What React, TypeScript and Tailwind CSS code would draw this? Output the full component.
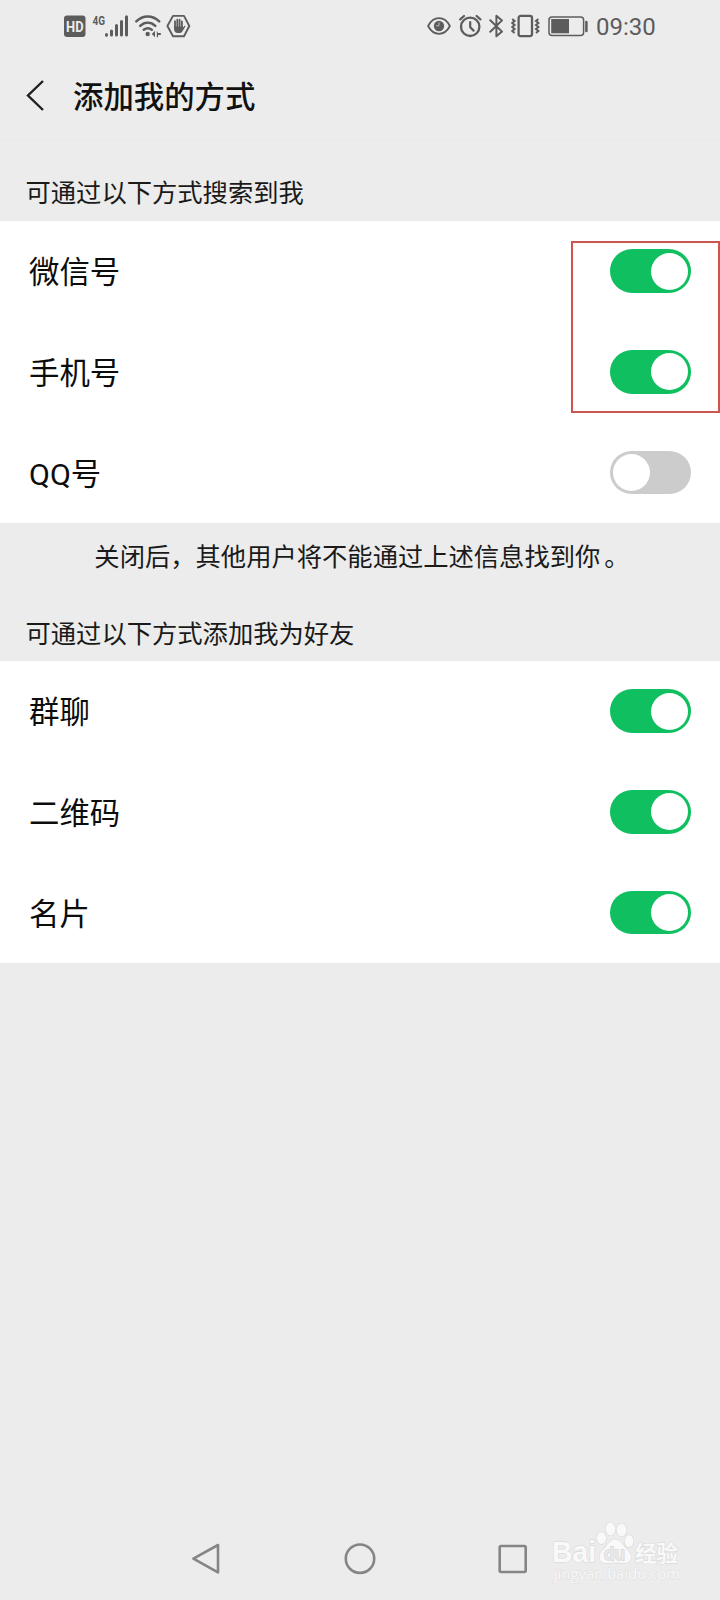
import { useState } from "react";

type Option = {
  id: string;
  label: string;
  enabled: boolean;
};

const searchOptions: Option[] = [
  { id: "wechat", label: "微信号", enabled: true },
  { id: "phone", label: "手机号", enabled: true },
  { id: "qq", label: "QQ号", enabled: false },
];

const friendOptions: Option[] = [
  { id: "group", label: "群聊", enabled: true },
  { id: "qrcode", label: "二维码", enabled: true },
  { id: "card", label: "名片", enabled: true },
];

function StatusBar() {
  return (
    <div className="flex h-[52px] items-center justify-between pl-[63.5px] pr-[63px] text-[#5c5c5c]">
      <div className="flex items-center">
        <svg width="22" height="24" viewBox="0 0 22 24">
          <rect x="0" y="1.5" width="21.5" height="21.5" rx="3" fill="currentColor" />
          <text
            x="10.8"
            y="17.6"
            textAnchor="middle"
            textLength="17.5"
            lengthAdjust="spacingAndGlyphs"
            fill="#ededed"
            className="font-['Roboto',sans-serif] text-[14.5px] font-bold"
          >
            HD
          </text>
        </svg>

        <svg className="ml-[6px] overflow-visible" width="37" height="24" viewBox="0 0 37 24">
          <text
            x="0.5"
            y="10.8"
            textLength="12.5"
            lengthAdjust="spacingAndGlyphs"
            fill="currentColor"
            className="font-['Roboto',sans-serif] text-[13.5px] font-bold"
          >
            4G
          </text>
          <g stroke="currentColor" strokeWidth="3" strokeLinecap="round">
            <path d="M14.5 20.4v.8M19.5 17v4M24.5 11.5V21M29.5 7.5V21M34.5 2.8V21" />
          </g>
        </svg>

        <svg className="ml-[5px]" width="28" height="24" viewBox="0 0 28 24" fill="none">
          <g stroke="currentColor" strokeWidth="2.5" strokeLinecap="round">
            <path d="M2.3 7.4C9 .8 18.5 .8 25.2 7.4" />
            <path d="M6.2 11.8c4.6-4.2 10.5-4.2 15.1 0" />
            <path d="M9.8 15.7c2.6-2 5.4-2 8 0" />
          </g>
          <circle cx="13.7" cy="20" r="2.2" fill="currentColor" />
          <path d="M21 16.8v6.4l-3.2-3.2zM22.8 16.8v6.4h1.2v-2.1h2.8v-2.2H24z" fill="currentColor" />
        </svg>

        <svg className="ml-[4px]" width="25" height="24" viewBox="0 0 25 24" fill="none">
          <path d="M7 1.9h11l5.3 10.1L18 22.3H7L1.4 12z" stroke="currentColor" strokeWidth="1.9" strokeLinejoin="round" />
          <path
            d="M9 14V7.2M11.3 13V5.7M13.6 13V5.7M15.9 14V7.5"
            stroke="currentColor"
            strokeWidth="1.8"
            strokeLinecap="round"
          />
          <path
            d="M8.1 12.5h8.7v1.2l1.4-1.7c.7-.5 1.3.1 1 .7l-2.7 4.6c-.7 1.2-1.6 1.8-3.2 1.8h-1.5c-2.3 0-3.7-1.6-3.7-3.8z"
            fill="currentColor"
          />
        </svg>
      </div>

      <div className="flex items-center">
        <svg width="24" height="24" viewBox="0 0 24 24" fill="none">
          <path d="M1.1 12C6.5 1.6 17.5 1.6 22.9 12 17.5 22.4 6.5 22.4 1.1 12z" stroke="currentColor" strokeWidth="1.8" strokeLinejoin="round" />
          <circle cx="12" cy="12" r="5.2" fill="currentColor" />
          <path d="M12 8.4v3.4h-3" stroke="#b8b8b8" strokeWidth="1" />
        </svg>

        <svg className="ml-[8px]" width="23" height="24" viewBox="0 0 23 24" fill="none" stroke="currentColor" strokeLinecap="round">
          <circle cx="11.2" cy="12.8" r="9.2" strokeWidth="2.3" />
          <path d="M11.2 8v5.2l3.4 3.4" strokeWidth="2.2" strokeLinejoin="round" />
          <path d="M1.2 5.4l3.8-3.4M21.4 5.4L17.6 2" strokeWidth="2.2" />
        </svg>

        <svg className="ml-[7px]" width="15" height="24" viewBox="0 0 15 24" fill="none" stroke="currentColor">
          <path d="M1.3 6.2L13 17.6l-5.6 4.7V1.8L13 6.4 1.3 17.8" strokeWidth="2" strokeLinejoin="round" strokeLinecap="round" />
        </svg>

        <svg className="ml-[7px]" width="29" height="24" viewBox="0 0 29 24" fill="none" stroke="currentColor">
          <rect x="7.6" y="1.9" width="13.4" height="20.2" rx="2" strokeWidth="2.3" />
          <path
            d="M1.2 5l2.4 2-2.4 2 2.4 2-2.4 2 2.4 2-2.4 2 2.4 2M27.4 5l-2.4 2 2.4 2-2.4 2 2.4 2-2.4 2 2.4 2-2.4 2"
            strokeWidth="2"
          />
        </svg>

        <svg className="ml-[8px]" width="42" height="24" viewBox="0 0 42 24" fill="none">
          <rect x="1" y="3" width="34.6" height="18.4" rx="3" stroke="currentColor" strokeWidth="1.5" />
          <rect x="3.2" y="5" width="17.8" height="14.3" fill="currentColor" />
          <path d="M38.4 8v9" stroke="currentColor" strokeWidth="2.5" strokeLinecap="round" />
        </svg>

        <span className="ml-[6px] w-[61px] whitespace-nowrap pt-[2px] font-['Roboto',sans-serif] text-[24px] leading-6">
          09:30
        </span>
      </div>
    </div>
  );
}

type SwitchProps = {
  checked: boolean;
  onChange: () => void;
};

function Switch({ checked, onChange }: SwitchProps) {
  return (
    <button
      type="button"
      role="switch"
      aria-checked={checked}
      onClick={onChange}
      className={`flex h-[43.5px] w-[81.5px] items-center rounded-full px-[3px] ${
        checked ? "justify-end bg-[#10bf60]" : "justify-start bg-[#cccccc]"
      }`}
    >
      <span className="size-[37px] rounded-full bg-white" />
    </button>
  );
}

function OptionList({ items }: { items: Option[] }) {
  const [options, setOptions] = useState(items);

  const toggle = (id: string) => {
    setOptions(options.map((o) => (o.id === id ? { ...o, enabled: !o.enabled } : o)));
  };

  return (
    <ul className="bg-white">
      {options.map((option) => (
        <li
          key={option.id}
          className="flex h-[100.7px] items-center justify-between pb-[0.4px] pl-[29px] pr-[28.6px] text-[30.4px] text-[#0c0c0c]"
        >
          <span className="pt-1">{option.label}</span>
          <Switch checked={option.enabled} onChange={() => toggle(option.id)} />
        </li>
      ))}
    </ul>
  );
}

function Watermark() {
  return (
    <svg
      className="absolute bottom-[12px] left-[548px]"
      width="140"
      height="72"
      viewBox="0 0 140 72"
      fill="#f9f9f9"
      stroke="#dcdcdc"
      strokeWidth="1.3"
      paintOrder="stroke"
    >
      <text
        x="4"
        y="46"
        textLength="44"
        lengthAdjust="spacingAndGlyphs"
        className="font-['Liberation_Sans',sans-serif] text-[29px] font-bold"
      >
        Bai
      </text>
      <ellipse cx="53.5" cy="22" rx="4.6" ry="6" />
      <ellipse cx="62.5" cy="13" rx="4.8" ry="6.4" />
      <ellipse cx="73.5" cy="14" rx="4.8" ry="6.4" />
      <ellipse cx="81" cy="25" rx="4.4" ry="6" />
      <path d="M67 23.5c4 0 6.5 3 9 6.5 3 4 7 6 7 11s-4 6.5-8 6c-5-.7-10-.7-15 0-5 .6-8.5-1.5-8.5-6s4-7 7-11c2.500-3.500 4.500-6.500 8.500-6.500z" />
      <text
        x="56"
        y="43.5"
        textLength="21"
        lengthAdjust="spacingAndGlyphs"
        fill="#e9e9e9"
        stroke="#d6d6d6"
        className="font-['Liberation_Sans',sans-serif] text-[18px] font-bold"
      >
        du
      </text>
      <text x="87" y="44.5" textLength="43" className="font-['Noto_Sans_CJK_SC',sans-serif] text-[21.5px] font-bold">
        经验
      </text>
      <text
        x="6"
        y="63"
        textLength="126"
        lengthAdjust="spacingAndGlyphs"
        strokeWidth="0.9"
        className="font-['Open_Sans',sans-serif] text-[15px]"
      >
        jingyan.baidu.com
      </text>
    </svg>
  );
}

function NavigationBar() {
  return (
    <div className="mt-auto flex h-[83px] items-center justify-between pl-[190px] pr-[192px] text-[#858585]">
      <svg width="32" height="32" viewBox="0 0 32 32" fill="none" stroke="currentColor" strokeWidth="2.6">
        <path d="M28 2v27.4L3.4 15.7z" strokeLinejoin="round" />
      </svg>
      <svg className="overflow-visible" width="32" height="32" viewBox="0 0 32 32" fill="none" stroke="currentColor" strokeWidth="2.6">
        <circle cx="17" cy="15.7" r="14.2" />
      </svg>
      <svg width="32" height="32" viewBox="0 0 32 32" fill="none" stroke="currentColor" strokeWidth="2.6">
        <rect x="3.7" y="3" width="26" height="26" rx="1.5" />
      </svg>
    </div>
  );
}

function App() {
  return (
    <div className="relative flex h-[1600px] w-[720px] flex-col overflow-hidden bg-[#ececec] font-['Roboto','Noto_Sans_CJK_SC',sans-serif] text-[#1a1a1a]">
      <StatusBar />

      <header className="flex h-[88px] items-center border-b border-[#e8e8e8] pl-[26px]">
        <svg width="19" height="32" viewBox="0 0 19 32" fill="none" className="mb-[2px] text-[#202020]">
          <path d="M17 2L2 16.5 17 31" stroke="currentColor" strokeWidth="2.4" />
        </svg>
        <h1 className="ml-[28px] pt-[4px] text-[30.4px] font-medium text-[#111111]">添加我的方式</h1>
      </header>

      <h2 className="flex h-[81px] items-end pb-[8px] pl-[25.5px] text-[25.3px] leading-[38px]">可通过以下方式搜索到我</h2>
      <div className="relative">
        <OptionList items={searchOptions} />
        <div className="pointer-events-none absolute left-[571px] top-[20px] h-[172px] w-[149px] border-2 border-[#cc5550]" />
      </div>

      <p className="flex h-[67px] items-center justify-center pt-[2px] text-[25.3px]">
        关闭后，其他用户将不能通过上述信息找到你
        <span className="-mr-1 pl-1">。</span>
      </p>
      <h2 className="flex h-[71px] items-end pb-[7px] pl-[25.5px] text-[25.3px] leading-[38px]">可通过以下方式添加我为好友</h2>
      <OptionList items={friendOptions} />

      <NavigationBar />
      <Watermark />
    </div>
  );
}

export default App;
